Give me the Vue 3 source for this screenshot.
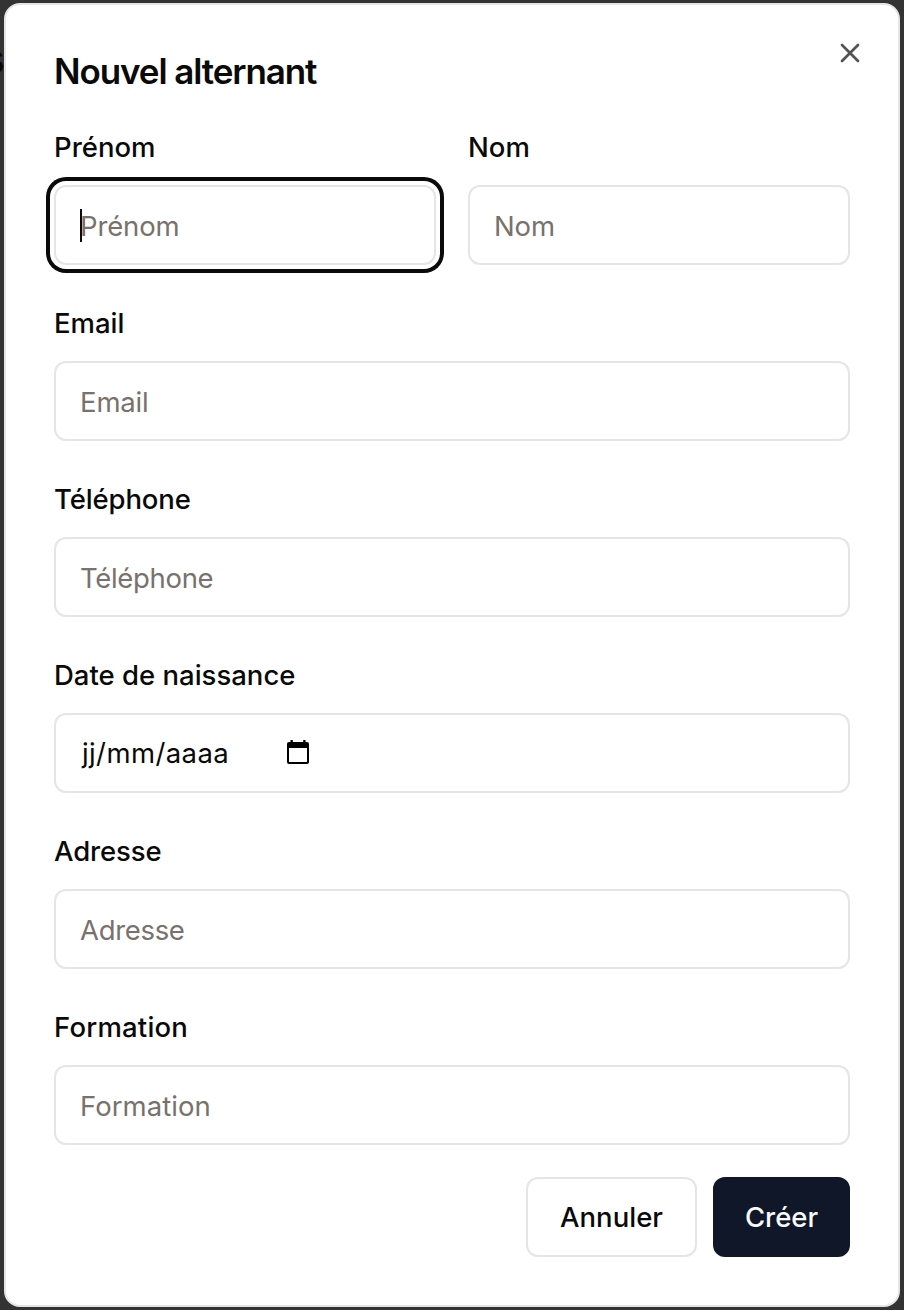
<script setup>
const fields = [
  { id: 'prenom', label: 'Prénom', focused: true, half: true },
  { id: 'nom', label: 'Nom', half: true },
  { id: 'email', label: 'Email' },
  { id: 'telephone', label: 'Téléphone' },
  { id: 'naissance', label: 'Date de naissance', date: true },
  { id: 'adresse', label: 'Adresse' },
  { id: 'formation', label: 'Formation' },
]
</script>

<template>
  <div class="overlay">
    <span class="behind">s</span>
    <section class="dialog" role="dialog" aria-labelledby="title">
      <h2 id="title" class="title">Nouvel alternant</h2>
      <button class="close" aria-label="Fermer">
        <svg width="32" height="32" viewBox="0 0 24 24" fill="none" stroke="currentColor" stroke-width="2" stroke-linecap="round">
          <path d="M18 6 6 18" />
          <path d="m6 6 12 12" />
        </svg>
      </button>
      <form class="form">
        <div v-for="f in fields" :key="f.id" class="field" :class="[f.id, { half: f.half }]">
          <div class="label"><span>{{ f.label }}</span></div>
          <div class="input" :class="{ focused: f.focused }">
            <template v-if="f.date">
              <span class="date">jj/mm/aaaa</span>
              <svg class="calendar" width="22" height="24" viewBox="0 0 22 24">
                <path fill="#000" fill-rule="evenodd" d="M3.5 0h2.3v2h10.4V0h2.3v2H20a2 2 0 0 1 2 2v18a2 2 0 0 1-2 2H2a2 2 0 0 1-2-2V4a2 2 0 0 1 2-2h1.5ZM2 8v14h18V8Z" />
              </svg>
            </template>
            <template v-else>
              <i v-if="f.focused" class="caret"></i>
              <span class="placeholder">{{ f.label }}</span>
            </template>
          </div>
        </div>
      </form>
      <footer class="actions">
        <button class="btn cancel"><span>Annuler</span></button>
        <button class="btn create"><span>Créer</span></button>
      </footer>
    </section>
  </div>
</template>

<style>
body { background: #333; overflow: hidden; }
</style>

<style scoped>
* { box-sizing: border-box; }
.overlay {
  position: relative;
  height: 1310px;
  padding: 3px 4px;
  overflow: hidden;
  background: #333;
  color: #0a0a0a;
  font-family: Inter, "Liberation Sans", sans-serif;
  font-size: 27.5px;
}
.behind {
  position: absolute;
  left: -20px;
  top: 35px;
  font-size: 44px;
  line-height: 46px;
  font-weight: 700;
  color: #080808;
}
.dialog {
  position: relative;
  height: 1304px;
  padding: 48px;
  border: 2px solid #e5e5e5;
  border-radius: 16px;
  background: #fff;
}
.title {
  margin: 0;
  font-size: 35px;
  line-height: 37px;
  height: 36px;
  font-weight: 600;
  letter-spacing: -1.1px;
  white-space: nowrap;
}
.close {
  position: absolute;
  top: 32px;
  right: 32px;
  width: 32px;
  height: 32px;
  padding: 0;
  border: 0;
  background: none;
  color: #535353;
}
.close svg { display: block; }
.form {
  display: grid;
  grid-template-columns: 1fr 1fr;
  gap: 32px;
  margin-top: 32px;
}
.field { grid-column: span 2; min-width: 0; }
.field.half { grid-column: span 1; }
.label {
  height: 64px;
  line-height: 52px;
  font-weight: 500;
  white-space: nowrap;
}
.input {
  position: relative;
  display: flex;
  align-items: center;
  height: 80px;
  padding: 2px 24px 0;
  border: 2px solid #e5e5e5;
  border-radius: 12px;
  background: #fff;
}
.input.focused { box-shadow: 0 0 0 4px #fff, 0 0 0 8px #0a0a0a; }
.caret {
  position: absolute;
  left: 24px;
  top: 22px;
  width: 2px;
  height: 33px;
  background: #0a0a0a;
}
.placeholder { color: #78716c; letter-spacing: -0.15px; }
.telephone .label, .adresse .label { letter-spacing: -0.12px; }
.telephone .placeholder, .adresse .placeholder { letter-spacing: -0.32px; }
.formation .label { letter-spacing: 0.2px; }
.formation .placeholder { letter-spacing: 0.05px; }
.naissance .input { padding-top: 0; }
.date { width: 207px; padding-left: 2px; letter-spacing: 0.4px; }
.calendar { margin-top: -3px; }
.actions {
  display: flex;
  justify-content: flex-end;
  gap: 16px;
  margin-top: 32px;
}
.btn {
  height: 80px;
  padding: 0;
  border: 2px solid #e5e5e5;
  border-radius: 12px;
  background: #fff;
  color: inherit;
  font: inherit;
  font-weight: 500;
}
.cancel { width: 171px; }
.create { width: 137px; border-color: #101728; background: #101728; color: #f8fafc; }
</style>
